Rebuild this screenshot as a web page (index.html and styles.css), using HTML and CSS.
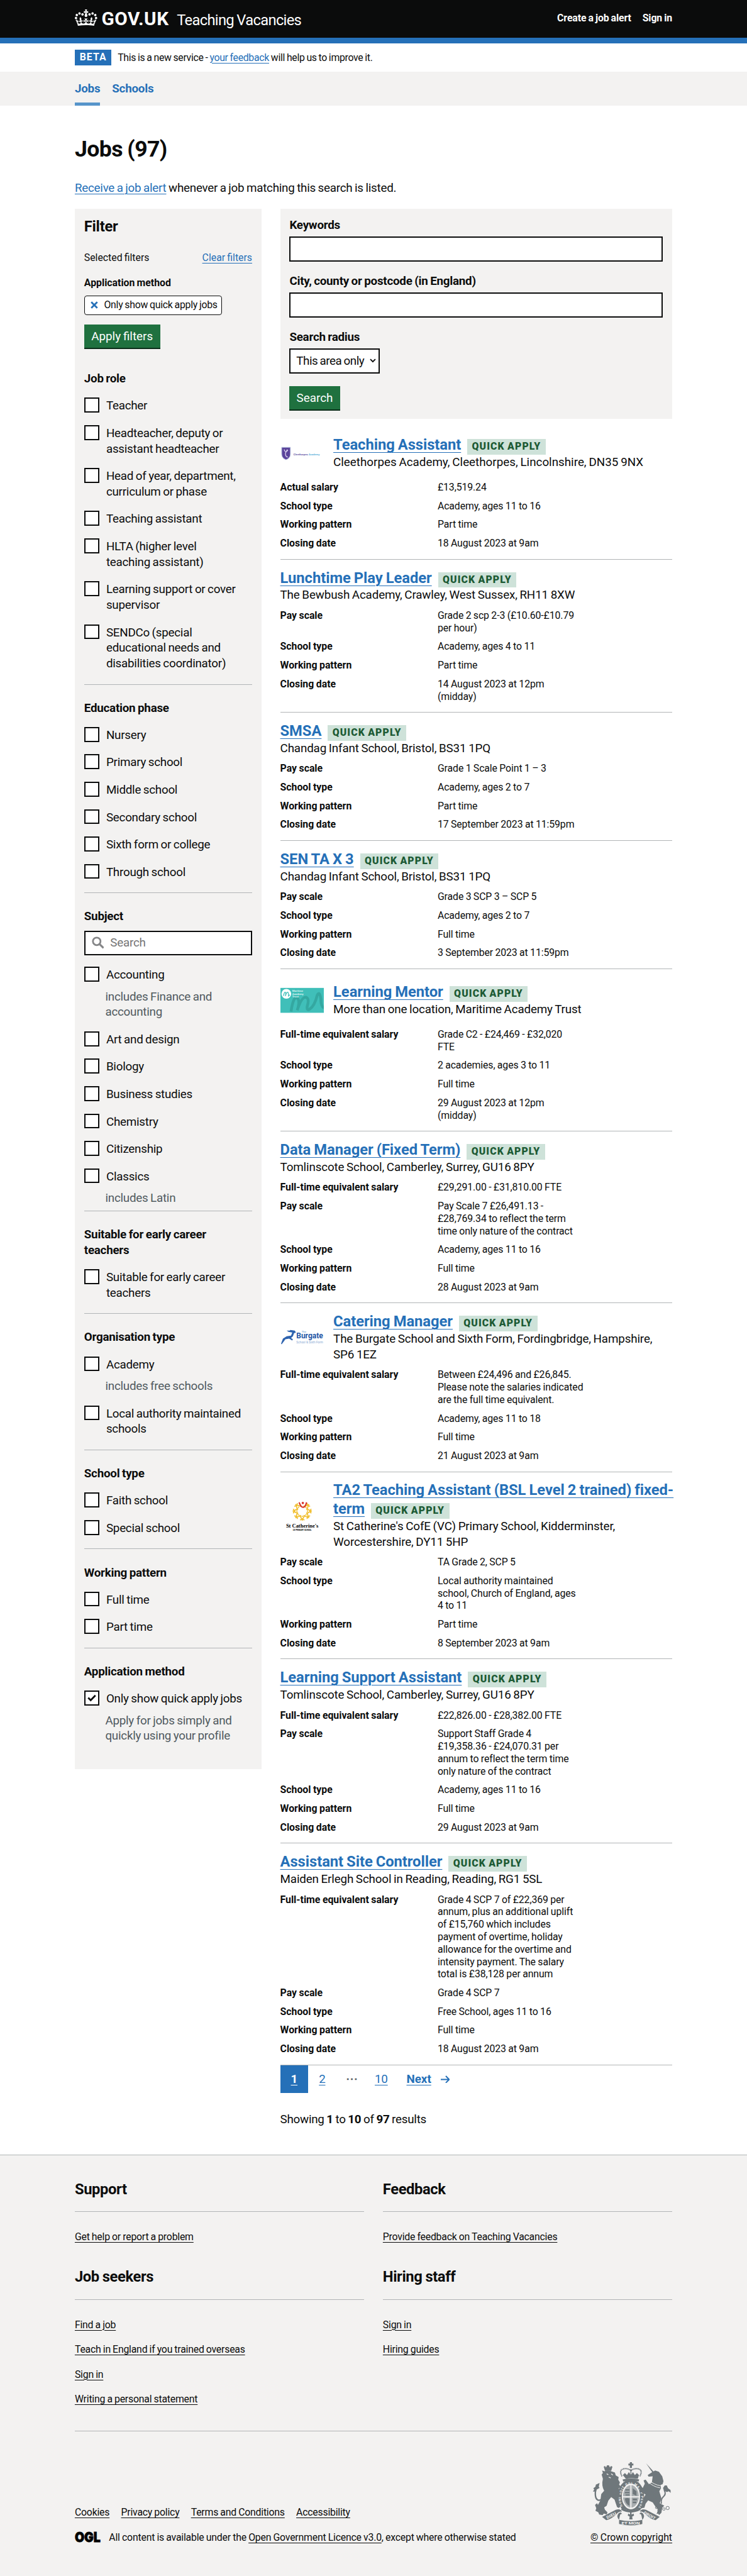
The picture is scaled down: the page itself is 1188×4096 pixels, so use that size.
FILE: index.html
```html
<!DOCTYPE html>
<html lang="en">
<head>
<meta charset="utf-8">
<title>Jobs (97) - Teaching Vacancies - GOV.UK</title>
<link rel="stylesheet" href="styles.css">
</head>
<body>
<header class="header">
  <div class="container header-inner">
    <svg class="crown" viewBox="0 0 132 97" aria-hidden="true"><path fill="currentColor" fill-rule="evenodd" d="M25 30.2c3.5 1.5 7.7-.2 9.1-3.7 1.5-3.6-.2-7.8-3.9-9.2-3.6-1.4-7.6.3-9.1 3.9-1.4 3.5.3 7.5 3.9 9zM9 39.5c3.6 1.5 7.8-.2 9.2-3.7 1.5-3.6-.2-7.8-3.9-9.1-3.6-1.5-7.6.2-9.1 3.8-1.4 3.5.3 7.5 3.8 9zM4.4 57.2c3.5 1.5 7.7-.2 9.1-3.8 1.5-3.6-.2-7.7-3.9-9.1-3.5-1.5-7.6.3-9.1 3.8-1.4 3.5.3 7.6 3.9 9.1zm38.3-21.4c3.5 1.5 7.7-.2 9.1-3.8 1.5-3.6-.2-7.7-3.9-9.1-3.6-1.5-7.6.3-9.1 3.8-1.3 3.6.4 7.7 3.9 9.1zm64.4-5.6c-3.6 1.5-7.8-.2-9.1-3.7-1.5-3.6.2-7.8 3.8-9.2 3.6-1.4 7.7.3 9.2 3.9 1.3 3.5-.4 7.5-3.9 9zm15.9 9.3c-3.6 1.5-7.7-.2-9.1-3.7-1.5-3.6.2-7.8 3.7-9.1 3.6-1.5 7.7.2 9.2 3.8 1.5 3.5-.3 7.5-3.8 9zm4.7 17.7c-3.6 1.5-7.8-.2-9.2-3.8-1.5-3.6.2-7.7 3.9-9.1 3.6-1.5 7.7.3 9.2 3.8 1.3 3.5-.4 7.6-3.9 9.1zM89.3 35.8c-3.6 1.5-7.8-.2-9.2-3.8-1.4-3.6.2-7.7 3.9-9.1 3.6-1.5 7.7.3 9.2 3.8 1.4 3.6-.3 7.7-3.9 9.1zM69.7 17.7l8.9 4.7V9.3l-8.9 2.8c-.2-.3-.5-.6-.9-.9L72.4 0H59.6l3.5 11.2c-.3.3-.6.5-.9.9l-8.8-2.8v13.1l8.8-4.7c.3.3.6.7.9.9l-5 15.4v.1c-.2.8-.4 1.6-.4 2.4 0 4.1 3.1 7.5 7 8.1h.2c.3 0 .7.1 1 .1.4 0 .7 0 1-.1h.2c4-.6 7.1-4.1 7.1-8.1 0-.8-.1-1.7-.4-2.4V34l-5.1-15.4c.4-.2.7-.6 1-.9zM66 92.8c16.9 0 32.8 1.1 47.1 3.2 4-16.9 8.9-26.7 14-33.5l-9.6-3.4c1 4.9 1.1 7.2 0 10.2-1.5-1.4-3-4.3-4.2-8.7L108.6 76c2.8-2 5-3.2 7.5-3.3-4.4 9.4-10 11.9-13.6 11.2-4.3-.8-6.3-4.6-5.6-7.9 1-4.7 5.7-5.9 8-.5 4.3-8.7-3-11.4-7.6-8.8 7.1-7.2 7.9-13.5 2.1-21.1-8 6.1-8.1 12.3-4.5 20.8-4.7-5.4-12.1-2.5-9.5 6.2 3.4-5.2 7.9-2 7.2 3.1-.6 4.3-6.4 7.8-13.5 7.2-10.3-.9-10.9-8-11.2-13.8 2.5-.5 7.1 1.8 11 7.3L80.2 60c-4.1 4.4-8 5.3-12.3 5.4 1.4-4.4 8-11.6 8-11.6H55.5s6.4 7.2 7.9 11.6c-4.2-.1-8-1-12.3-5.4l1.4 16.4c3.9-5.5 8.5-7.7 10.9-7.3-.3 5.8-.9 12.8-11.1 13.8-7.2.6-12.9-2.9-13.5-7.2-.7-5 3.8-8.3 7.1-3.1 2.7-8.7-4.6-11.6-9.4-6.2 3.7-8.5 3.6-14.7-4.6-20.8-5.8 7.6-5 13.9 2.2 21.1-4.7-2.6-11.9.1-7.7 8.8 2.3-5.5 7.1-4.2 8.1.5.7 3.3-1.3 7.1-5.7 7.9-3.5.7-9-1.8-13.5-11.2 2.5.1 4.7 1.3 7.5 3.3l-4.7-15.4c-1.2 4.4-2.7 7.2-4.3 8.7-1.1-3-.9-5.3 0-10.2l-9.5 3.4c5 6.9 9.9 16.7 14 33.5 14.8-2.1 30.8-3.2 47.7-3.2z"/></svg>
    <div class="brand"><span class="govuk">GOV.UK</span><span class="service">Teaching Vacancies</span></div>
    <nav class="account"><a>Create a job alert</a><a>Sign in</a></nav>
  </div>
</header>
<div class="container phase"><strong class="phase-tag">BETA</strong><span class="phase-text">This is a new service - <a class="link">your feedback</a> will help us to improve it.</span></div>
<nav class="nav"><div class="container nav-inner"><a class="nav-item current">Jobs</a><a class="nav-item">Schools</a></div></nav>

<main class="container">
  <h1 class="title">Jobs (97)</h1>
  <p class="intro"><a class="link">Receive a job alert</a> whenever a job matching this search is listed.</p>
  <div class="columns">
    <aside class="filters">
      <h2 class="filters-title">Filter</h2>
      <div class="selected"><span>Selected filters</span><a class="link">Clear filters</a></div>
      <h3 class="selected-name">Application method</h3>
      <div class="chip"><svg class="chip-x" viewBox="0 0 12 12"><path d="M1.200 1.200l9.600 9.600M10.800 1.200L1.200 10.800" stroke="#2570b8" stroke-width="2.800"/></svg>Only show quick apply jobs</div>
      <div class="button apply">Apply filters</div>

      <section class="group first">
        <h3>Job role</h3>
        <div class="check"><i class="box"></i><span>Teacher</span></div>
        <div class="check"><i class="box"></i><span>Headteacher, deputy or<br>assistant headteacher</span></div>
        <div class="check"><i class="box"></i><span>Head of year, department,<br>curriculum or phase</span></div>
        <div class="check"><i class="box"></i><span>Teaching assistant</span></div>
        <div class="check"><i class="box"></i><span>HLTA (higher level<br>teaching assistant)</span></div>
        <div class="check"><i class="box"></i><span>Learning support or cover<br>supervisor</span></div>
        <div class="check"><i class="box"></i><span>SENDCo (special<br>educational needs and<br>disabilities coordinator)</span></div>
      </section>
      <section class="group">
        <h3>Education phase</h3>
        <div class="check"><i class="box"></i><span>Nursery</span></div>
        <div class="check"><i class="box"></i><span>Primary school</span></div>
        <div class="check"><i class="box"></i><span>Middle school</span></div>
        <div class="check"><i class="box"></i><span>Secondary school</span></div>
        <div class="check"><i class="box"></i><span>Sixth form or college</span></div>
        <div class="check"><i class="box"></i><span>Through school</span></div>
      </section>
      <section class="group subject">
        <h3>Subject</h3>
        <div class="search"><svg viewBox="0 0 20 20"><circle cx="7.900" cy="7.900" r="6.100" fill="none" stroke="#858688" stroke-width="2.800"/><path d="M12.600 12.600l6.200 6" stroke="#858688" stroke-width="3.200"/></svg><span>Search</span></div>
        <div class="check"><i class="box"></i><span>Accounting</span></div>
        <p class="hint">includes Finance and<br>accounting</p>
        <div class="check"><i class="box"></i><span>Art and design</span></div>
        <div class="check"><i class="box"></i><span>Biology</span></div>
        <div class="check"><i class="box"></i><span>Business studies</span></div>
        <div class="check"><i class="box"></i><span>Chemistry</span></div>
        <div class="check"><i class="box"></i><span>Citizenship</span></div>
        <div class="check"><i class="box"></i><span>Classics</span></div>
        <p class="hint">includes Latin</p>
      </section>
      <section class="group">
        <h3>Suitable for early career<br>teachers</h3>
        <div class="check"><i class="box"></i><span>Suitable for early career<br>teachers</span></div>
      </section>
      <section class="group">
        <h3>Organisation type</h3>
        <div class="check"><i class="box"></i><span>Academy</span></div>
        <p class="hint">includes free schools</p>
        <div class="check"><i class="box"></i><span>Local authority maintained<br>schools</span></div>
      </section>
      <section class="group">
        <h3>School type</h3>
        <div class="check"><i class="box"></i><span>Faith school</span></div>
        <div class="check"><i class="box"></i><span>Special school</span></div>
      </section>
      <section class="group">
        <h3>Working pattern</h3>
        <div class="check"><i class="box"></i><span>Full time</span></div>
        <div class="check"><i class="box"></i><span>Part time</span></div>
      </section>
      <section class="group last">
        <h3>Application method</h3>
        <div class="check"><i class="box"><svg viewBox="0 0 14 12"><path d="M1.300 5.600l4 4L12.900 1.700" fill="none" stroke="#0b0c0c" stroke-width="2.800"/></svg></i><span>Only show quick apply jobs</span></div>
        <p class="hint">Apply for jobs simply and<br>quickly using your profile</p>
      </section>
    </aside>

    <div class="results">
      <form class="search-panel">
        <label>Keywords</label>
        <input type="text">
        <label>City, county or postcode (in England)</label>
        <input type="text">
        <label>Search radius</label>
        <div class="select">This area only<svg viewBox="0 0 10 7"><path d="M1 1.200l4 4 4-4" fill="none" stroke="#0b0c0c" stroke-width="1.900"/></svg></div>
        <div class="button">Search</div>
      </form>

      <article class="job">
        <div class="head with-logo">
          <div class="logo"><svg viewBox="0 0 70 70"><path d="M2 25.500h14v11q0 6.500-7 9-7-2.500-7-9z" fill="#5b449b" stroke="#b8c4e0" stroke-width="1"/><path d="M6 29q2 7 6 1M11 29l-3 6q0 6 4 6" fill="none" stroke="#d9d2ee" stroke-width="1.300"/><text x="21" y="38" class="logo-tiny" textLength="42" fill="#6a5aa8">Cleethorpes <tspan fill="#63b3dc">Academy</tspan></text></svg></div>
          <div><h2><a>Teaching Assistant</a><strong class="tag">Quick apply</strong></h2><p class="loose">Cleethorpes Academy, Cleethorpes, Lincolnshire, DN35 9NX</p></div>
        </div>
        <dl><dt>Actual salary</dt><dd>£13,519.24</dd><dt>School type</dt><dd>Academy, ages 11 to 16</dd><dt>Working pattern</dt><dd>Part time</dd><dt>Closing date</dt><dd>18 August 2023 at 9am</dd></dl>
      </article>

      <article class="job">
        <div class="head"><div><h2><a>Lunchtime Play Leader</a><strong class="tag">Quick apply</strong></h2><p>The Bewbush Academy, Crawley, West Sussex, RH11 8XW</p></div></div>
        <dl><dt>Pay scale</dt><dd>Grade 2 scp 2-3 (£10.60-£10.79<br>per hour)</dd><dt>School type</dt><dd>Academy, ages 4 to 11</dd><dt>Working pattern</dt><dd>Part time</dd><dt>Closing date</dt><dd>14 August 2023 at 12pm<br>(midday)</dd></dl>
      </article>

      <article class="job">
        <div class="head"><div><h2><a>SMSA</a><strong class="tag">Quick apply</strong></h2><p>Chandag Infant School, Bristol, BS31 1PQ</p></div></div>
        <dl><dt>Pay scale</dt><dd>Grade 1 Scale Point 1 – 3</dd><dt>School type</dt><dd>Academy, ages 2 to 7</dd><dt>Working pattern</dt><dd>Part time</dd><dt>Closing date</dt><dd>17 September 2023 at 11:59pm</dd></dl>
      </article>

      <article class="job">
        <div class="head"><div><h2><a>SEN TA X 3</a><strong class="tag">Quick apply</strong></h2><p>Chandag Infant School, Bristol, BS31 1PQ</p></div></div>
        <dl><dt>Pay scale</dt><dd>Grade 3 SCP 3 – SCP 5</dd><dt>School type</dt><dd>Academy, ages 2 to 7</dd><dt>Working pattern</dt><dd>Full time</dd><dt>Closing date</dt><dd>3 September 2023 at 11:59pm</dd></dl>
      </article>

      <article class="job">
        <div class="head with-logo">
          <div class="logo"><svg viewBox="0 0 70 70"><rect y="15" width="70" height="40" fill="#40bfb9"/><path d="M17 53q4-26 10-22 5 5 0 20 7-22 14-21 6 2 2 15-1 7 4 4 8-5 12-22 4-8 6 6 0 12 5 14" fill="none" stroke="#34a8a1" stroke-width="4.500"/><circle cx="9.500" cy="24.500" r="7.800" fill="#fff"/><path d="M5 28q1-7 3-6 1 1 0 6 2-7 4-6 1 1 1 6l2-2" fill="none" stroke="#40bfb9" stroke-width="1.300"/><text x="19" y="21.500" class="logo-tiny" fill="#d8f3f1">Maritime</text><text x="19" y="26" class="logo-tiny" fill="#d8f3f1">Academy</text><text x="19" y="30.500" class="logo-tiny" fill="#d8f3f1">Trust</text></svg></div>
          <div><h2><a>Learning Mentor</a><strong class="tag">Quick apply</strong></h2><p>More than one location, Maritime Academy Trust</p></div>
        </div>
        <dl><dt>Full-time equivalent salary</dt><dd>Grade C2 - £24,469 - £32,020<br>FTE</dd><dt>School type</dt><dd>2 academies, ages 3 to 11</dd><dt>Working pattern</dt><dd>Full time</dd><dt>Closing date</dt><dd>29 August 2023 at 12pm<br>(midday)</dd></dl>
      </article>

      <article class="job">
        <div class="head"><div><h2><a>Data Manager (Fixed Term)</a><strong class="tag">Quick apply</strong></h2><p>Tomlinscote School, Camberley, Surrey, GU16 8PY</p></div></div>
        <dl><dt>Full-time equivalent salary</dt><dd>£29,291.00 - £31,810.00 FTE</dd><dt>Pay scale</dt><dd>Pay Scale 7 £26,491.13 -<br>£28,769.34 to reflect the term<br>time only nature of the contract</dd><dt>School type</dt><dd>Academy, ages 11 to 16</dd><dt>Working pattern</dt><dd>Full time</dd><dt>Closing date</dt><dd>28 August 2023 at 9am</dd></dl>
      </article>

      <article class="job">
        <div class="head with-logo">
          <div class="logo"><svg viewBox="0 0 70 70"><path d="M1 45l3-8 6-4 7-1 2-5-6-1-3-2 5 0 1-1 7 1 2 3-3 1-2 5-3 3 3 2-1 2-5-3-6 1-3 4-3 4z" fill="#2d62ae"/><text x="25.500" y="36.700" class="logo-name" textLength="43" lengthAdjust="spacingAndGlyphs" fill="#1f56a5">Burgate</text><text x="34" y="27.500" class="logo-tiny" fill="#8db0d8">The</text><text x="25.500" y="44" class="logo-sub" textLength="43" lengthAdjust="spacingAndGlyphs" fill="#88a9d3">School &amp; Sixth Form</text></svg></div>
          <div><h2><a>Catering Manager</a><strong class="tag">Quick apply</strong></h2><p>The Burgate School and Sixth Form, Fordingbridge, Hampshire,<br>SP6 1EZ</p></div>
        </div>
        <dl><dt>Full-time equivalent salary</dt><dd>Between £24,496 and £26,845.<br>Please note the salaries indicated<br>are the full time equivalent.</dd><dt>School type</dt><dd>Academy, ages 11 to 18</dd><dt>Working pattern</dt><dd>Full time</dd><dt>Closing date</dt><dd>21 August 2023 at 9am</dd></dl>
      </article>

      <article class="job">
        <div class="head with-logo">
          <div class="logo"><svg viewBox="0 0 70 70"><g transform="translate(35 28)" fill="none" stroke="#f0bd2b" stroke-width="1.700"><g id="figure"><path d="M6.500-4l5 2.500q2 1.500 0 3l-5 2.500M12 0h3.500M14.500-3.500q-3 3.500 0 7"/><circle cx="8.500" cy="0" r="1.100" fill="#f0bd2b" stroke="none"/></g><use href="#figure" transform="rotate(45)"/><use href="#figure" transform="rotate(90)"/><use href="#figure" transform="rotate(135)"/><use href="#figure" transform="rotate(180)"/><use href="#figure" transform="rotate(225)"/><use href="#figure" transform="rotate(315)"/><path d="M-5-15q3 8 6.500 8T7-15" stroke="#d8342a" stroke-width="2.200" transform="translate(0 1)"/><circle cx="1" cy="-13" r="1.900" fill="#d8342a" stroke="none"/></g><text x="9" y="55" class="logo-serif" textLength="52" lengthAdjust="spacingAndGlyphs">St Catherine's</text><text x="20" y="59.500" class="logo-tiny" textLength="30" lengthAdjust="spacingAndGlyphs">CE PRIMARY SCHOOL</text></svg></div>
          <div><h2><a>TA2 Teaching Assistant (BSL Level 2 trained) fixed-<br>term</a><strong class="tag">Quick apply</strong></h2><p>St Catherine's CofE (VC) Primary School, Kidderminster,<br>Worcestershire, DY11 5HP</p></div>
        </div>
        <dl><dt>Pay scale</dt><dd>TA Grade 2, SCP 5</dd><dt>School type</dt><dd>Local authority maintained<br>school, Church of England, ages<br>4 to 11</dd><dt>Working pattern</dt><dd>Part time</dd><dt>Closing date</dt><dd>8 September 2023 at 9am</dd></dl>
      </article>

      <article class="job">
        <div class="head"><div><h2><a>Learning Support Assistant</a><strong class="tag">Quick apply</strong></h2><p>Tomlinscote School, Camberley, Surrey, GU16 8PY</p></div></div>
        <dl><dt>Full-time equivalent salary</dt><dd>£22,826.00 - £28,382.00 FTE</dd><dt>Pay scale</dt><dd>Support Staff Grade 4<br>£19,358.36 - £24,070.31 per<br>annum to reflect the term time<br>only nature of the contract</dd><dt>School type</dt><dd>Academy, ages 11 to 16</dd><dt>Working pattern</dt><dd>Full time</dd><dt>Closing date</dt><dd>29 August 2023 at 9am</dd></dl>
      </article>

      <article class="job">
        <div class="head"><div><h2><a>Assistant Site Controller</a><strong class="tag">Quick apply</strong></h2><p>Maiden Erlegh School in Reading, Reading, RG1 5SL</p></div></div>
        <dl><dt>Full-time equivalent salary</dt><dd>Grade 4 SCP 7 of £22,369 per<br>annum, plus an additional uplift<br>of £15,760 which includes<br>payment of overtime, holiday<br>allowance for the overtime and<br>intensity payment. The salary<br>total is £38,128 per annum</dd><dt>Pay scale</dt><dd>Grade 4 SCP 7</dd><dt>School type</dt><dd>Free School, ages 11 to 16</dd><dt>Working pattern</dt><dd>Full time</dd><dt>Closing date</dt><dd>18 August 2023 at 9am</dd></dl>
      </article>

      <nav class="pages"><span class="page on"><a>1</a></span><span class="page"><a>2</a></span><span class="page dots">⋯</span><span class="page"><a>10</a></span><span class="next"><a>Next</a><svg viewBox="0 0 15 13"><path d="M0 6.500h13.500M8 1l5.500 5.500L8 12" fill="none" stroke="#2570b8" stroke-width="2"/></svg></span></nav>
      <p class="showing">Showing <b>1</b> to <b>10</b> of <b>97</b> results</p>
    </div>
  </div>
</main>

<footer class="footer">
  <div class="container">
    <div class="footer-grid">
      <section><h2>Support</h2><ul><li><a>Get help or report a problem</a></li></ul></section>
      <section><h2>Feedback</h2><ul><li><a>Provide feedback on Teaching Vacancies</a></li></ul></section>
      <section><h2>Job seekers</h2><ul><li><a>Find a job</a></li><li><a>Teach in England if you trained overseas</a></li><li><a>Sign in</a></li><li><a>Writing a personal statement</a></li></ul></section>
      <section><h2>Hiring staff</h2><ul><li><a>Sign in</a></li><li><a>Hiring guides</a></li></ul></section>
    </div>
    <div class="meta">
      <div class="meta-left">
        <div class="meta-links"><a>Cookies</a><a>Privacy policy</a><a>Terms and Conditions</a><a>Accessibility</a></div>
        <div class="licence"><svg class="ogl" viewBox="0 0 41 17"><text x="0" y="16.300" textLength="41" lengthAdjust="spacingAndGlyphs">OGL</text></svg><span>All content is available under the <a>Open Government Licence v3.0</a>, except where otherwise stated</span></div>
      </div>
      <div class="meta-right">
        <svg class="crest" viewBox="36 36 375 306" fill="#6f777b" stroke="#6f777b" stroke-width="0">
          <!-- crown -->
          <path d="M214 36h10v7h7v9h-7v12h-10V52h-7v-9h7z"/>
          <path d="M176 104q-16-30 8-36 22-4 35 10 13-14 35-10 24 6 8 36M219 70v34" fill="none" stroke-width="6" stroke-dasharray="5 2"/>
          <path d="M180 98l10-10 10 10 9-14 10 14 10-14 9 14 10-10 10 10-6 18q-33-6-57 0z"/>
          <path d="M179 119q40-9 80 0l-3 10q-37-8-74 0z"/>
          <!-- garter and shield -->
          <ellipse cx="219" cy="201" rx="54" ry="72" fill="none" stroke-width="20"/>
          <ellipse cx="219" cy="201" rx="38" ry="54" fill="#a9aeb0"/>
          <path d="M219 146v112M180 203h78" stroke="#f3f2f1" stroke-width="5"/>
          <path d="M192 166h20v7h-20zM190 179h22v7h-22zM193 191h19v6h-19zM228 162l18 14v22l-18-8zM228 212h20v8h-20zM228 226h17v8h-17zM190 212q12-6 22 0v34q-20-8-22-34z"/>
          <path id="ring" d="M185 258A49 67 0 1 1 253 258" fill="none"/>
          <text class="crest-text" fill="#f3f2f1"><textPath href="#ring" textLength="270" startOffset="12">HONI SOIT QUI MAL Y PENSE</textPath></text>
          <!-- lion -->
          <path d="M88 58l6 20h30l6-20-7-4-5 8-5-11h-9l-5 11-5-8z"/>
          <path d="M92 80q14-8 32 0l18 6 4 14 14 8-2 12 8 14-4 10 10 10-12 8 3 14q6 22-6 34l10 40-6 8-9-6-12-36-16-12-14 18-8 24-12 8 4 12 12 12-4 10-14 4-22-4-4-10-14-8 4-12-6-16 10-8 4 8 12-22 4-30 14-16q-14-26-6-58l-6-20 6-8-4-12z"/>
          <path d="M36 178l6-10-4-6 10-8 2-10 18-8-4 18 4 6-14 8-2 10z"/>
          <path d="M48 176q-4 42 18 44 16-2 26-24" fill="none" stroke-width="7"/>
          <path d="M102 92l8 4M124 92l8 6M112 108l10 4" stroke="#f3f2f1" stroke-width="4"/>
          <!-- unicorn -->
          <path d="M292 41l40 44-7 4z"/>
          <path d="M322 84l14-8 18 6 16 22 6 24-4 14-10 4 2 16-8 14 10 34-8 24 22 12-10 10-4 24-14 14-10-6 8-22-14-18-12-18-22-10-12 16-8 26-12 6-8-8 8-12 8-36 12-20-22-12-10-16 4-10 14 6 10-20-6-16 10-4 16 22 14-8 4-30-20 2-4-8z"/>
          <path d="M306 122q22 22 56 28M304 132q22 22 56 28" fill="none" stroke="#f3f2f1" stroke-width="3"/>
          <path d="M366 236q-4-22 10-34 14-12 4-30" fill="none" stroke-width="6"/>
          <path d="M378 174l-4-14 8-12 10 0 6 14 12 8 1 14-10-8-8 4z"/>
          <circle cx="396" cy="257" r="8" fill="none" stroke-width="3"/><circle cx="378" cy="262" r="6" fill="none" stroke-width="3"/><circle cx="354" cy="268" r="6" fill="none" stroke-width="3"/><circle cx="342" cy="255" r="5" fill="none" stroke-width="3"/>
          <!-- motto scroll -->
          <path d="M78 298l18 16q30-8 54-32l12-4q22-2 20 18l-18 22q54 10 110 0l-18-22q-2-20 20-18l12 4q24 24 54 32l18-16-10-14-16 4-30-26-16-6q-18-2-28 12l-10-6q-30 16-62 0l-10 6q-10-14-28-12l-16 6-30 26-16-4z" fill="#f3f2f1"/>
          <path d="M80 300l66-34q22-8 30 8-16-2-26 12-24 24-50 30zM358 300l-66-34q-22-8-30 8 16-2 26 12 24 24 50 30z"/>
          <path d="M162 314q56 12 112 0v20q-56 14-112 0zM162 314q-16-18-2-32 12-8 16 4-8-4-10 8zM274 314q16-18 2-32-12-8-16 4 8-4 10 8z"/>
          <path d="M215 276h7v12l10-4 2 10-9 4 2 14h-16l2-14-9-4 2-10 9 4z"/>
          <path d="M176 254q42 28 86 0l4 12q-46 26-94 0z"/>
          <text class="crest-text big" fill="#f3f2f1" transform="translate(105 310) rotate(-27)" textLength="50" lengthAdjust="spacingAndGlyphs">DIEU</text>
          <text class="crest-text big" fill="#f3f2f1" x="174" y="337" textLength="88" lengthAdjust="spacingAndGlyphs">ET MON</text>
          <text class="crest-text big" fill="#f3f2f1" transform="translate(279 284) rotate(29)" textLength="62" lengthAdjust="spacingAndGlyphs">DROIT</text>
        </svg>
        <a class="copyright">© Crown copyright</a>
      </div>
    </div>
  </div>
</footer>
</body>
</html>
```
FILE: styles.css
```css
/* 1rem is ten design pixels */
html { font-size: 9.897px; }
*, *::before, *::after { box-sizing: border-box; }
body { margin: 0; color: #0b0c0c; background: #fff; font-family: Roboto, "Liberation Sans", sans-serif; font-size: 1.9rem; line-height: 2.5rem; white-space: nowrap; letter-spacing: -0.025rem; word-spacing: -0.08rem; }
h1, h2, h3, p, ul, dl, dd { margin: 0; padding: 0; }
ul { list-style: none; }
a { text-underline-offset: 0.17em; text-decoration-thickness: 1px; }
.container { width: 96rem; margin: 0 auto; }
.link { color: #2570b8; text-decoration-line: underline; }

.header { background: #0b0c0c; color: #fff; height: 7rem; border-bottom: 1rem solid #2570b8; }
.header-inner { display: flex; align-items: flex-start; }
.crown { width: 3.6rem; height: 2.65rem; margin: 1.55rem 0.7rem 0 0; }
.brand { display: flex; align-items: baseline; margin-top: 1.47rem; }
.govuk { font-weight: 700; font-size: 3rem; line-height: 3rem; width: 12.1rem; letter-spacing: 0.06rem; }
.service { font-size: 2.4rem; line-height: 2.4rem; letter-spacing: -0.07rem; }
.account { margin: 1.95rem 0 0 auto; display: flex; gap: 1.8rem; font-weight: 700; font-size: 1.6rem; line-height: 2rem; letter-spacing: -0.01rem; }

.phase { height: 4.5rem; display: flex; align-items: center; font-size: 1.6rem; line-height: 2rem; }
.phase-text { letter-spacing: -0.03rem; }
.phase-tag { background: #2570b8; color: #fff; width: 5.9rem; height: 2.5rem; line-height: 2.5rem; text-align: center; letter-spacing: 1px; margin-right: 1rem; }
.nav { background: #f3f2f1; height: 5.5rem; }
.nav-inner { display: flex; gap: 2rem; }
.nav-item { color: #2570b8; font-weight: 700; height: 5.5rem; padding-top: 1.5rem; }
.nav-item.current { border-bottom: 5px solid #5694ca; width: 4rem; }

.title { font-size: 3.6rem; line-height: 4rem; margin-top: 5rem; letter-spacing: -0.06rem; }
.intro { margin-top: 3rem; }
.columns { display: flex; justify-content: space-between; align-items: flex-start; margin-top: 2rem; }

.filters { width: 30rem; height: 250.7rem; background: #f3f2f1; padding: 1.45rem 1.5rem 0; }
.filters-title { font-size: 2.4rem; line-height: 3rem; }
.selected { display: flex; justify-content: space-between; margin-top: 2.5rem; font-size: 1.6rem; line-height: 2rem; letter-spacing: 0; }
.selected-name { font-size: 1.6rem; line-height: 2rem; margin-top: 2.05rem; letter-spacing: 0; }
.chip { display: flex; align-items: center; width: 22.1rem; height: 3.1rem; margin-top: 1rem; border: 1px solid #0b0c0c; border-radius: 4px; background: #fff; padding-left: 0.95rem; font-size: 1.6rem; }
.chip-x { width: 1.2rem; height: 1.2rem; margin-right: 0.95rem; flex: none; }
.button { background: #1f713f; color: #fff; border-bottom: 2px solid #0b2e19; height: 4rem; line-height: 3.9rem; text-align: center; letter-spacing: 0; }
.apply { width: 12.2rem; margin-top: 1.5rem; }
.group { border-bottom: 1px solid #b1b4b6; padding: 2.55rem 0 0.2rem; }
.group.first { padding-top: 3.55rem; }
.group.last { border: 0; }
.group.subject { height: 51.1rem; }
.group h3 { font-size: 1.9rem; line-height: 2.5rem; margin-bottom: 1.75rem; }
.check { display: flex; gap: 1.15rem; margin-bottom: 1.8rem; }
.check span { padding-top: 0.1rem; }
.box { width: 2.4rem; height: 2.4rem; border: 2px solid #0b0c0c; background: #fff; flex: none; display: flex; align-items: center; justify-content: center; }
.box svg { width: 1.4rem; height: 1.2rem; }
.hint { color: #505a5f; margin: -0.8rem 0 1.8rem 3.4rem; }
.search { display: flex; align-items: center; height: 4rem; border: 2px solid #0b0c0c; background: #fff; margin: -0.8rem 0 1.8rem; padding-left: 1rem; color: #757575; }
.search svg { width: 2rem; height: 2rem; margin-right: 1rem; }

.results { width: 63rem; }
.search-panel { background: #f3f2f1; height: 33.8rem; padding: 1.5rem 1.5rem 0; display: flex; flex-direction: column; align-items: flex-start; margin-bottom: 0.5rem; }
.search-panel label { font-weight: 700; margin-bottom: 0.5rem; }
.search-panel input { width: 60rem; height: 4rem; border: 2px solid #0b0c0c; background: #fff; margin: 0 0 2rem; }
.select { display: flex; align-items: center; justify-content: space-between; width: 14.5rem; height: 4rem; border: 2px solid #0b0c0c; background: #fff; padding: 0 0.4rem 0 0.9rem; letter-spacing: -0.05rem; }
.select svg { width: 1rem; height: 0.7rem; flex: none; }
.search-panel .button { width: 8.1rem; margin-top: 2rem; }

.job { padding: 1.5rem 0; border-bottom: 1px solid #b1b4b6; }
.head { margin-bottom: 1rem; display: flex; align-items: center; }
.job .loose { letter-spacing: 0; }
.logo { width: 8.54rem; height: 7rem; flex: none; letter-spacing: 0; word-spacing: 0; }
.logo svg { width: 7rem; height: 7rem; display: block; }
.logo-tiny { font-size: 4.3px; font-weight: 700; }
.logo-name { font-size: 12px; font-weight: 700; }
.logo-sub { font-size: 5px; }
.logo-serif { font: 700 8px "Liberation Serif", serif; }
.job h2 { font-size: 2.4rem; line-height: 3rem; letter-spacing: -0.005rem; }
.job h2 a { color: #2570b8; text-decoration-line: underline; }
.job p { letter-spacing: -0.015rem; }
.tag { display: inline-block; margin: -0.5rem 0 -0.6rem 1rem; width: 12.6rem; height: 2.5rem; line-height: 2.45rem; text-align: center; font-size: 1.6rem; letter-spacing: 1.1px; text-transform: uppercase; background: #cee2d9; color: #1c5a34; }
.job dl { display: grid; grid-template-columns: 25.3rem 1fr; row-gap: 1rem; font-size: 1.6rem; line-height: 2rem; letter-spacing: -0.01rem; word-spacing: -0.04rem; }
.job dt { font-weight: 700; letter-spacing: 0; }

.pages { display: flex; color: #2570b8; line-height: 4.5rem; }
.pages a { text-decoration-line: underline; }
.page { width: 4.5rem; text-align: center; }
.page.on { background: #2570b8; color: #fff; font-weight: 700; }
.dots { color: #505a5f; font-weight: 700; width: 5rem; }
.next { display: flex; align-items: center; gap: 1.5rem; font-weight: 700; margin-left: 1.8rem; letter-spacing: 0; }
.next svg { width: 1.5rem; height: 1.3rem; }
.showing { margin-top: 3rem; }

.footer { margin-top: 4.4rem; background: #f3f2f1; border-top: 1px solid #b1b4b6; padding-top: 4rem; height: 67.7rem; font-size: 1.6rem; line-height: 2rem; letter-spacing: -0.022rem; word-spacing: -0.05rem; }
.footer a { text-decoration-line: underline; }
.footer-grid { display: grid; grid-template-columns: 1fr 1fr; column-gap: 3rem; border-bottom: 1px solid #b1b4b6; }
.footer h2 { font-size: 2.4rem; line-height: 3rem; padding-bottom: 2rem; border-bottom: 1px solid #b1b4b6; margin-bottom: 3rem; letter-spacing: -0.04rem; }
.footer li { margin-bottom: 2rem; }
.footer ul { padding-bottom: 2rem; }
.meta { display: flex; justify-content: space-between; align-items: flex-end; margin-top: 5rem; }
.meta-links { display: flex; gap: 1.85rem; margin-bottom: 2.05rem; }
.licence { display: flex; }
.licence span { letter-spacing: -0.02rem; }
.ogl { width: 4.1rem; height: 1.7rem; margin: 0.1rem 1.4rem 0 0; overflow: visible; font: 900 22px Inter, sans-serif; stroke: #0b0c0c; stroke-width: 0.8px; }
.meta-right { display: flex; flex-direction: column; align-items: flex-end; }
.copyright { letter-spacing: 0; }
.crest { width: 12.5rem; height: 10.2rem; margin: 0 0.2rem 0.95rem 0; letter-spacing: 0; word-spacing: 0; }
.crest-text { font-size: 15px; font-weight: 700; }
.crest-text.big { font-size: 19px; }
```
